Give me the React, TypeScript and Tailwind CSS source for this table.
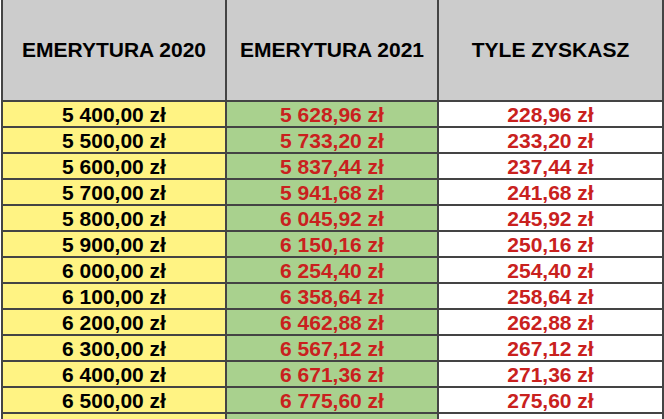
const rows = [
  ["5 400,00 zł", "5 628,96 zł", "228,96 zł"],
  ["5 500,00 zł", "5 733,20 zł", "233,20 zł"],
  ["5 600,00 zł", "5 837,44 zł", "237,44 zł"],
  ["5 700,00 zł", "5 941,68 zł", "241,68 zł"],
  ["5 800,00 zł", "6 045,92 zł", "245,92 zł"],
  ["5 900,00 zł", "6 150,16 zł", "250,16 zł"],
  ["6 000,00 zł", "6 254,40 zł", "254,40 zł"],
  ["6 100,00 zł", "6 358,64 zł", "258,64 zł"],
  ["6 200,00 zł", "6 462,88 zł", "262,88 zł"],
  ["6 300,00 zł", "6 567,12 zł", "267,12 zł"],
  ["6 400,00 zł", "6 671,36 zł", "271,36 zł"],
  ["6 500,00 zł", "6 775,60 zł", "275,60 zł"],
  ["", "", ""],
];

const App = () => {
  return (
    <div className="w-[664px] h-[419px] overflow-hidden bg-white pl-[1px] font-['Liberation_Sans',Arial,sans-serif] font-bold">
      <div className="grid grid-cols-[222px_210px_223px] gap-x-[2px] gap-y-[2px] bg-[#444] px-[2px] w-[663px]">
        <div className="h-[100px] bg-[#cccccc] flex items-center justify-center text-[21px] text-black">EMERYTURA 2020</div>
        <div className="h-[100px] bg-[#cccccc] flex items-center justify-center text-[21px] text-black">EMERYTURA 2021</div>
        <div className="h-[100px] bg-[#cccccc] flex items-center justify-center text-[21px] text-black">TYLE ZYSKASZ</div>
        {rows.map((r, i) => (
          <div key={i} className="contents">
            <div className="h-[24px] bg-[#fff383] flex items-center justify-center text-[21px] text-black leading-none">{r[0]}</div>
            <div className="h-[24px] bg-[#a9d18e] flex items-center justify-center text-[21px] text-[#c9211e] leading-none">{r[1]}</div>
            <div className="h-[24px] bg-white flex items-center justify-center text-[21px] text-[#c9211e] leading-none">{r[2]}</div>
          </div>
        ))}
      </div>
    </div>
  );
};

export default App;
